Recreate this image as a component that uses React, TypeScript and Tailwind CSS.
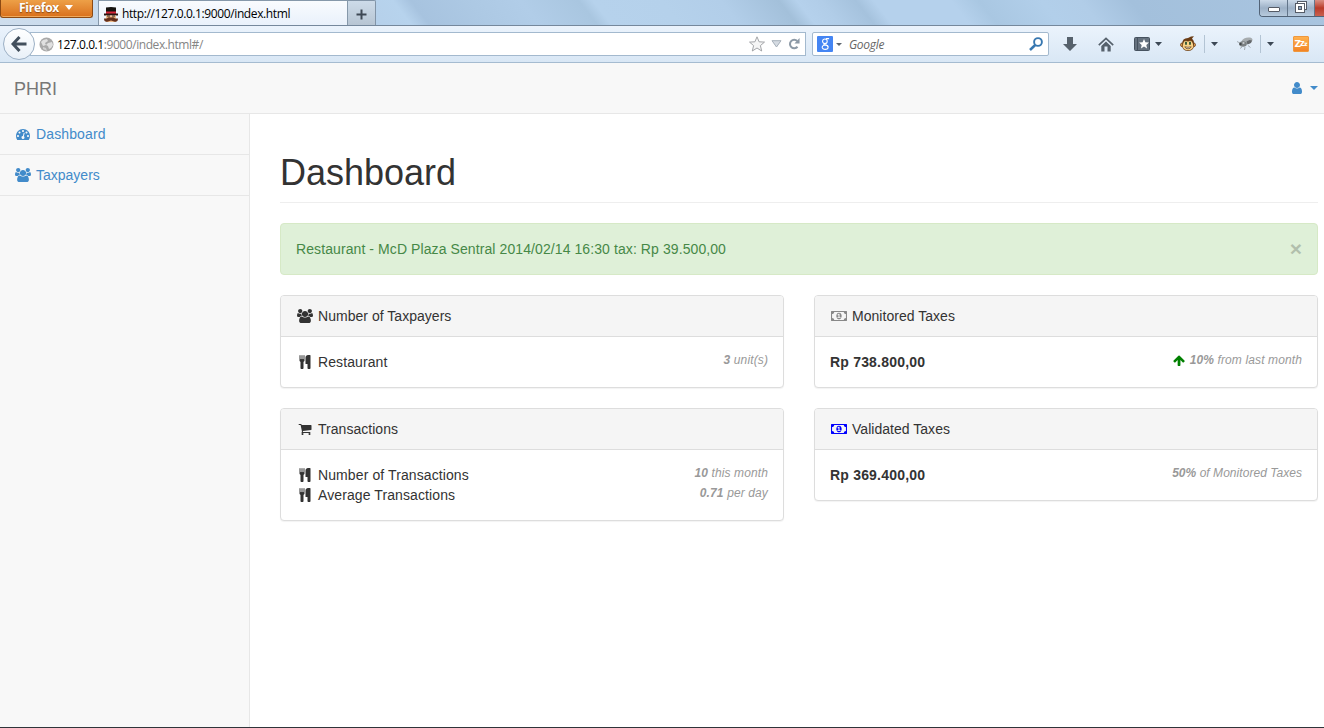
import React from "react";

const PATHS = {
  tachometer:
    "M384 1152q0-53-37.5-90.5t-90.5-37.5-90.5 37.5-37.5 90.5 37.5 90.5 90.5 37.5 90.5-37.5 37.5-90.5zm192-448q0-53-37.5-90.5t-90.5-37.5-90.5 37.5-37.5 90.5 37.5 90.5 90.5 37.5 90.5-37.5 37.5-90.5zm428 481l101-382q6-26-7.5-48.5t-38.5-29.5-48 6.5-30 39.5l-101 382q-60 5-107 43.5t-63 98.5q-20 77 20 146t117 89 146-20 89-117q16-60-6-117t-72-91zm660-33q0-53-37.5-90.5t-90.5-37.5-90.5 37.5-37.5 90.5 37.5 90.5 90.5 37.5 90.5-37.5 37.5-90.5zm-640-640q0-53-37.5-90.5t-90.5-37.5-90.5 37.5-37.5 90.5 37.5 90.5 90.5 37.5 90.5-37.5 37.5-90.5zm448 192q0-53-37.5-90.5t-90.5-37.5-90.5 37.5-37.5 90.5 37.5 90.5 90.5 37.5 90.5-37.5 37.5-90.5zm320 448q0 261-141 483-19 29-54 29h-1402q-35 0-54-29-141-221-141-483 0-182 71-348t191-286 286-191 348-71 348 71 286 191 191 286 71 348z",
  users:
    "M593 896q-162 5-265 128h-134q-82 0-138-40.5t-56-118.5q0-353 124-353 6 0 43.5 21t97.5 42.5 119 21.5q67 0 133-23-5 37-5 66 0 139 81 256zm1071 637q0 120-73 189.5t-194 69.5h-874q-121 0-194-69.5t-73-189.5q0-53 3.5-103.5t14-109 26.5-108.5 43-97.5 62-81 85.5-53.5 111.5-20q10 0 43 21.5t73 48 107 48 135 21.5 135-21.5 107-48 73-48 43-21.5q61 0 111.5 20t85.5 53.5 62 81 43 97.5 26.5 108.5 14 109 3.5 103.5zm-1024-1277q0 106-75 181t-181 75-181-75-75-181 75-181 181-75 181 75 75 181zm704 384q0 159-112.5 271.5t-271.5 112.5-271.5-112.5-112.5-271.5 112.5-271.5 271.5-112.5 271.5 112.5 112.5 271.5zm576 225q0 78-56 118.5t-138 40.5h-134q-103-123-265-128 81-117 81-256 0-29-5-66 66 23 133 23 59 0 119-21.5t97.5-42.5 43.5-21q124 0 124 353zm-128-609q0 106-75 181t-181 75-181-75-75-181 75-181 181-75 181 75 75 181z",
  cutlery:
    "M832 64v640q0 61-35.5 111t-92.5 70v779q0 52-38 90t-90 38h-128q-52 0-90-38t-38-90v-779q-57-20-92.5-70t-35.5-111v-640q0-26 19-45t45-19 45 19 19 45v416q0 26 19 45t45 19 45-19 19-45v-416q0-26 19-45t45-19 45 19 19 45v416q0 26 19 45t45 19 45-19 19-45v-416q0-26 19-45t45-19 45 19 19 45zm768 0v1600q0 52-38 90t-90 38h-128q-52 0-90-38t-38-90v-512h-224q-13 0-22.5-9.5t-9.5-22.5v-800q0-132 94-226t226-94h256q26 0 45 19t19 45z",
  cart:
    "M704 1536q0 52-38 90t-90 38-90-38-38-90 38-90 90-38 90 38 38 90zm896 0q0 52-38 90t-90 38-90-38-38-90 38-90 90-38 90 38 38 90zm128-1088v512q0 24-16.5 42.5t-40.5 21.5l-1044 122q13 60 13 70 0 16-24 64h920q26 0 45 19t19 45-19 45-45 19h-1024q-26 0-45-19t-19-45q0-11 8-31.5t16-36 21.5-40 15.5-29.5l-177-823h-204q-26 0-45-19t-19-45 19-45 45-19h256q16 0 28.5 6.5t19.5 15.5 13 24.5 8 26 5.5 29.5 4.5 26h1201q26 0 45 19t19 45z",
  user:
    "M1536 1399q0 109-62.5 187t-150.5 78h-854q-88 0-150.5-78t-62.5-187q0-85 8.5-160.5t31.5-152 58.5-131 94-89 134.5-34.5q131 128 313 128t313-128q76 0 134.5 34.5t94 89 58.5 131 31.5 152 8.5 160.5zm-256-887q0 159-112.5 271.5t-271.5 112.5-271.5-112.5-112.5-271.5 112.5-271.5 271.5-112.5 271.5 112.5 112.5 271.5z",
  arrowUp:
    "M1611 971q0 51-37 90l-75 75q-38 38-91 38-54 0-90-38l-294-293v704q0 52-37.5 84.5t-90.5 32.5h-128q-53 0-90.5-32.5t-37.5-84.5v-704l-294 293q-36 38-90 38t-90-38l-75-75q-38-38-38-90 0-53 38-91l651-651q35-37 90-37 54 0 91 37l651 651q37 39 37 91z",
  money:
    "M768 1152h384v-96h-128v-448h-114l-148 137 77 80q42-37 55-57h2v288h-128v96zm512-256q0 70-21 142t-59.5 134-101.5 101-138 39-138-39-101.5-101-59.5-134-21-142 21-142 59.5-134 101.5-101 138-39 138 39 101.5 101 59.5 134 21 142zm512 256v-512q-106 0-181-75t-75-181h-1152q0 106-75 181t-181 75v512q106 0 181 75t75 181h1152q0-106 75-181t181-75zm128-832v1152q0 26-19 45t-45 19h-1792q-26 0-45-19t-19-45v-1152q0-26 19-45t45-19h1792q26 0 45 19t19 45z",
};

type IconName = keyof typeof PATHS;

function Icon({ name, className = "" }: { name: IconName; className?: string }) {
  const wide = name === "users" || name === "money";
  return (
    <span className={`flex w-[18px] shrink-0 ${wide ? "pl-px" : "justify-center"} ${className}`}>
      <svg
        className={wide ? "h-[14px] w-4" : "h-[14px] w-[14px]"}
        viewBox={wide ? "0 0 1920 1792" : "0 0 1792 1792"}
        preserveAspectRatio="none"
        fill="currentColor"
      >
        <path d={PATHS[name]} />
      </svg>
    </span>
  );
}

function Caret({ className = "h-1 w-[7px]" }: { className?: string }) {
  return (
    <svg className={`shrink-0 ${className}`} viewBox="0 0 7 4" preserveAspectRatio="none" fill="currentColor">
      <path d="M0 0h7L3.5 4z" />
    </svg>
  );
}

function TitleBar() {
  return (
    <div className="relative flex h-[26px] shrink-0 items-start overflow-hidden border-b border-[#75889c] bg-[#b5d1ec]">
      <div className="absolute -left-5 h-[25px] w-[1364px] skew-x-[38deg] bg-[linear-gradient(90deg,#cfdeed_0px,#c8daec_110px,#b5cfe9_370px,#b7d3ed_422px,#a7c3df_440px,#adc9e4_500px,#b1cde8_550px,#a9c6e0_608px,#b6d2ec_622px,#b5d1eb_690px,#b2cee9_750px,#a3c0da_808px,#b5d1ec_826px,#b1cde8_850px,#a5c2dd_885px,#b5d1ec_903px,#b5d1ec_980px,#a9c7e2_1008px,#b2cfea_1070px,#b1cde8_1110px,#a3c0dc_1160px,#a9c5e0_1364px)]" />
      <div className="relative flex h-[18px] w-[93px] items-start rounded-b-[3px] border border-t-0 border-[#8d4a13] bg-gradient-to-b from-[#eda047] to-[#d9701a] pl-[18px] shadow-[inset_0_-1px_0_#f0a95b]">
        <span className="font-['Open_Sans',sans-serif] text-[12px] font-bold leading-4 tracking-[-0.25px] text-white [text-shadow:0_1px_1px_#8d4a13]">
          Firefox
        </span>
        <Caret className="ml-[6px] mt-[5px] h-[5px] w-2 text-white" />
      </div>
      <div className="relative ml-[5px] flex h-[25px] w-[250px] items-center border-x border-t border-[#8698aa] bg-gradient-to-b from-[#f9fbfe] to-[#e9f1fb] pl-1">
        <svg className="mt-[3px] h-4 w-4" viewBox="0 0 16 16">
          <path d="M3 .5q5-1 10 0V5H3z" fill="#15120f" />
          <path d="M3 4.500h10V7H3z" fill="#d52639" />
          <path d="M1 6.500h14v2H1z" fill="#2a1512" />
          <path d="M3 8.500h10V15H3z" fill="#f2bd8a" />
          <path d="M4 8.500h3v1H4zm5 0h3v1H9z" fill="#322018" />
          <path d="M8 10.500q3-1 4 1h3q0 4-4 3l-3-1-3 1q-4 1-4-3h3q1-2 4-1z" fill="#65301c" />
        </svg>
        <span className="ml-[3px] mt-[2px] whitespace-nowrap font-['Open_Sans',sans-serif] text-[12px] leading-4 tracking-[-0.39px] text-black">
          http://127.0.0.1:9000/index.html
        </span>
      </div>
      <div className="relative flex h-[25px] w-7 items-center justify-center rounded-tr-[2px] border-r border-t border-[#8294a7] bg-gradient-to-b from-[#cddbe9] to-[#b7c5d3]">
        <svg className="mt-[3px] h-[11px] w-[11px]" viewBox="0 0 11 11" stroke="#3e4854" strokeWidth="2">
          <path d="M5.500 0.500v10M0.500 5.500h10" />
        </svg>
      </div>
      <div className="relative ml-auto flex h-[17px] w-[65px] overflow-hidden rounded-bl-[4px] border-b border-l border-[#526377] text-[#48515c]">
        <div className="flex w-7 items-center justify-center border-r border-[#62758a] bg-gradient-to-b from-[#cbd9e8] via-[#9db1c7] to-[#b7cadd] pt-[2px]">
          <svg className="h-[5px] w-3" viewBox="0 0 12 5">
            <rect x=".5" y=".5" width="11" height="4" rx=".5" fill="#fff" stroke="#555b66" />
          </svg>
        </div>
        <div className="flex w-[27px] items-center justify-center border-r border-[#62758a] bg-gradient-to-b from-[#cbd9e8] via-[#9db1c7] to-[#b7cadd]">
          <svg className="mb-[2px] h-3 w-3" viewBox="0 0 12 12" fill="#fff" stroke="#555b66">
            <rect x="2.500" y=".5" width="9" height="8" />
            <rect x=".5" y="2.500" width="9" height="9" />
            <rect x="3.500" y="5.500" width="3" height="3" fill="#8ea5bf" />
          </svg>
        </div>
        <div className="flex-1 bg-gradient-to-b from-[#d88d82] via-[#b93a29] to-[#c9604f]" />
      </div>
    </div>
  );
}

function Toolbar() {
  return (
    <div className="flex h-[37px] shrink-0 items-center border-b border-[#a5bbd0] bg-gradient-to-b from-[#ebf3fc] to-[#d9e7f5] text-[#3c4855]">
      <div className="z-10 ml-[3px] flex h-8 w-8 shrink-0 items-center justify-center rounded-full border border-[#9cb0c5] bg-gradient-to-b from-white to-[#e9f0f8]">
        <svg className="h-4 w-4" viewBox="0 0 16 16" fill="none" stroke="#424f5c" strokeWidth="3">
          <path d="M8.500 1L2 8l6.500 7M2.500 8H15.500" />
        </svg>
      </div>
      <div className="-ml-[5px] flex h-6 w-[776px] items-center border border-[#a3b9ce] bg-white pl-2">
        <svg className="h-[15px] w-[15px]" viewBox="0 0 15 15">
          <circle cx="7.500" cy="7.500" r="7" fill="#a9a9a9" />
          <path d="M2 5l2-2 4-1 1 2-3 2 1 2-3 1zM9 6l4-1 1 3-2 3-2 1-1-3-2-1z" fill="#e0e0e0" />
          <path d="M4 10l3 1 1 3-4-2z" fill="#d2d2d2" />
        </svg>
        <span className="ml-[3px] mt-[2px] whitespace-nowrap font-['Open_Sans',sans-serif] text-[12px] leading-4 tracking-[-0.43px] text-[#858585]">
          <span className="text-black">127.0.0.1</span>:9000/index.html#/
        </span>
        <svg className="ml-auto h-4 w-4" viewBox="0 0 16 16" fill="#f5f5f5" stroke="#a3a5a8">
          <path d="M8 .8l2.100 5 5.400.3-4.100 3.500 1.300 5.400L8 12l-4.700 3 1.300-5.400L.5 6.100l5.400-.3z" />
        </svg>
        <svg className="ml-[6px] h-2 w-[11px]" viewBox="0 0 11 8" fill="#d5dbe2" stroke="#a5afb9">
          <path d="M1 .7h9L5.500 7z" />
        </svg>
        <svg className="ml-[6px] mr-[5px] h-3 w-3" viewBox="0 0 13 13">
          <path d="M10 3.300A4.600 4.600 0 1 0 10.300 9.500" fill="none" stroke="#8c99a6" strokeWidth="2.200" />
          <path d="M12.500 0v6H7z" fill="#8c99a6" />
        </svg>
      </div>
      <div className="ml-[6px] flex h-6 w-[237px] items-center rounded-[2px] border border-[#a3b9ce] bg-white pl-1">
        <div className="flex h-4 w-4 items-center justify-center rounded-[1px] bg-[#4485f3]">
          <svg className="h-[14px] w-[9px]" viewBox="0 0 10 14" fill="none" stroke="white" strokeWidth="1.200">
            <circle cx="4.300" cy="4" r="2.600" />
            <ellipse cx="4.600" cy="10.600" rx="3.300" ry="2.400" />
            <path d="M9 1H5.500M4 6.600q-2 1 1 1.500 3 .5 2.500 2" />
          </svg>
        </div>
        <Caret className="ml-[3px] h-[3px] w-[6px] text-[#5d6670]" />
        <span className="ml-[7px] mt-[2px] font-['Open_Sans',sans-serif] text-[12px] italic leading-4 tracking-[-0.3px] text-[#666]">
          Google
        </span>
        <svg className="ml-auto mr-[5px] h-[14px] w-[14px]" viewBox="0 0 14 14" fill="none" stroke="#3777b0">
          <circle cx="9" cy="5" r="3.900" strokeWidth="1.900" />
          <path d="M6.200 8L1 13" strokeWidth="2.500" />
        </svg>
      </div>
      <svg className="ml-[14px] h-[14px] w-[14px] shrink-0" viewBox="0 0 14 14" fill="#56616c">
        <path d="M4 0h6v7h4l-7 7-7-7h4z" />
      </svg>
      <svg className="ml-[21px] h-[15px] w-4 shrink-0" viewBox="0 0 16 15">
        <path d="M.8 8.200L8 1.500l7.200 6.700" fill="none" stroke="#56616c" strokeWidth="1.700" />
        <path d="M3.300 9L8 4.600 12.700 9v5.500H9.500V9.500h-3v5H3.300z" fill="#56616c" />
      </svg>
      <svg className="ml-5 h-[14px] w-4 shrink-0" viewBox="0 0 16 14">
        <rect x=".5" y=".5" width="15" height="13" rx="1" fill="#65717e" stroke="#46525f" />
        <path d="M3.500 1v12" stroke="#46525f" />
        <path d="M10 2l1.400 3.300 3.600.3-2.700 2.400.8 3.500-3.100-1.900L6.900 11.500l.8-3.500L5 5.600l3.600-.3z" fill="#fff" />
      </svg>
      <Caret className="ml-[5px] h-1 w-[7px]" />
      <svg className="ml-[18px] h-4 w-4 shrink-0" viewBox="0 0 16 16">
        <circle cx="2.400" cy="8.800" r="1.900" fill="#e0a050" stroke="#6a3a14" strokeWidth=".8" />
        <circle cx="13.600" cy="8.800" r="1.900" fill="#e0a050" stroke="#6a3a14" strokeWidth=".8" />
        <path d="M2.200 8Q2 2 8 2l3-1.500 3-.2-2 2.200Q14 4 14 8q.500 7-6 7T2.200 8z" fill="#6b3c15" />
        <path d="M3.200 7.500Q4 4 7 5l1 .8 1-.8q3-1 3.800 2.500l.5 3Q12.500 14.300 8 14.300T2.800 10.500z" fill="#f9d287" />
        <path d="M6 5.800v3M10 5.800v3" stroke="#1f4a2c" strokeWidth="1.700" />
        <path d="M4.800 10.800q3.200 1 6.400 0-.8 2-3.200 2t-3.200-2z" fill="#fff" stroke="#563314" strokeWidth=".7" />
      </svg>
      <div className="ml-[8px] h-[18px] w-px bg-[#b3c4d4]" />
      <Caret className="ml-[6px] h-1 w-[7px]" />
      <svg className="ml-[19px] h-4 w-4 shrink-0" viewBox="0 0 16 16">
        <path d="M3 7L0 5.500M5 11l-2 1.500M8 11l-.5 3M11 9.500l2.500 2" stroke="#a5adb4" />
        <ellipse cx="10" cy="4.800" rx="5.600" ry="3.200" transform="rotate(-15 10 4.800)" fill="#a6abae" />
        <ellipse cx="6" cy="8" rx="3.800" ry="2.800" fill="#7b8082" />
        <path d="M9.500 5.500l3-1.500 2.500.5-1 2.500-3.500 1.500z" fill="#64686b" />
        <path d="M2.500 7h2v2h-2z" fill="#44484b" />
        <circle cx="6.500" cy="7" r="1.100" fill="#c9cdd0" />
      </svg>
      <div className="ml-[7px] h-[18px] w-px bg-[#b3c4d4]" />
      <Caret className="ml-[6px] h-1 w-[7px]" />
      <div className="ml-[19px] flex h-4 w-4 shrink-0 items-center justify-center overflow-hidden rounded-[1px] border border-[#ef983e] bg-gradient-to-b from-[#ffb14e] to-[#f28426] font-['DejaVu_Sans',sans-serif] font-bold leading-none text-white">
        <span className="text-[9px] tracking-[-1px]">Z</span>
        <span className="text-[8px] tracking-[-0.5px]">z</span>
        <span className="mb-px text-[6px]">z</span>
      </div>
    </div>
  );
}

function Panel({ icon, iconClass, title, children }: { icon: IconName; iconClass?: string; title: string; children: React.ReactNode }) {
  return (
    <section className="rounded-[4px] border border-[#ddd] bg-white shadow-[0_1px_1px_rgba(0,0,0,0.05)]">
      <h2 className="flex h-[41px] items-center rounded-t-[3px] border-b border-[#ddd] bg-[#f5f5f5] px-[15px]">
        <Icon name={icon} className={iconClass} />
        <span className="ml-1 tracking-[0.03px]">{title}</span>
      </h2>
      <div className="p-[15px]">{children}</div>
    </section>
  );
}

function Row({ label, icon, value, note, up }: { label: string; icon?: boolean; value: string; note: string; up?: boolean }) {
  return (
    <div className="flex h-5">
      {icon ? (
        <div className="flex items-center">
          <Icon name="cutlery" />
          <span className="ml-1 tracking-[0.1px]">{label}</span>
        </div>
      ) : (
        <strong className="tracking-[0.2px]">{label}</strong>
      )}
      <div className="ml-auto flex h-4 items-center whitespace-nowrap text-[12px] italic leading-4 text-[#999]">
        {up && (
          <svg className="mr-1 h-[13px] w-[13px]" viewBox="0 0 1792 1792" fill="green">
            <path d={PATHS.arrowUp} />
          </svg>
        )}
        <span className={note === "of Monitored Taxes" ? "tracking-[0.04px]" : "tracking-[0.12px]"}>
          <b>{value}</b> {note}
        </span>
      </div>
    </div>
  );
}

export default function App() {
  return (
    <div className="flex h-[728px] w-[1324px] flex-col overflow-hidden border-b border-[#30343a] bg-white font-['Liberation_Sans',Arial,sans-serif] text-[14px] leading-5 text-[#333]">
      <TitleBar />
      <Toolbar />
      <header className="flex h-[51px] shrink-0 items-center border-b border-[#e7e7e7] bg-[#f8f8f8] pl-[14px] pr-[6px]">
        <span className="pt-[2px] text-[18px] text-[#777]">PHRI</span>
        <div className="ml-auto flex items-center text-[#428bca]">
          <Icon name="user" />
          <Caret className="ml-[4px] h-1 w-2" />
        </div>
      </header>
      <div className="flex min-h-0 flex-1">
        <nav className="w-[250px] shrink-0 border-r border-[#e7e7e7] bg-[#f8f8f8] text-[#428bca]">
          <a className="flex h-[41px] items-center border-b border-[#e7e7e7] pl-[14px]">
            <Icon name="tachometer" />
            <span className="ml-1 tracking-[0.13px]">Dashboard</span>
          </a>
          <a className="flex h-[41px] items-center border-b border-[#e7e7e7] pl-[14px]">
            <Icon name="users" />
            <span className="ml-1">Taxpayers</span>
          </a>
        </nav>
        <main className="flex-1 pl-[30px] pr-[6px] pt-[39px]">
          <h1 className="h-[50px] border-b border-[#eee] text-[36px] leading-10">Dashboard</h1>
          <div className="mt-5 flex h-[52px] items-center rounded-[4px] border border-[#d6e9c6] bg-[#dff0d8] px-[15px] text-[#468847]">
            <span className="tracking-[0.09px]">Restaurant - McD Plaza Sentral 2014/02/14 16:30 tax: Rp 39.500,00</span>
            <span className="ml-auto text-[21px] font-bold leading-5 text-black opacity-20">×</span>
          </div>
          <div className="mt-5 grid grid-cols-2 gap-x-[30px]">
            <div className="flex flex-col gap-5">
              <Panel icon="users" title="Number of Taxpayers">
                <Row icon label="Restaurant" value="3" note="unit(s)" />
              </Panel>
              <Panel icon="cart" title="Transactions">
                <Row icon label="Number of Transactions" value="10" note="this month" />
                <Row icon label="Average Transactions" value="0.71" note="per day" />
              </Panel>
            </div>
            <div className="flex flex-col gap-5">
              <Panel icon="money" iconClass="text-[#888]" title="Monitored Taxes">
                <Row label="Rp 738.800,00" value="10%" note="from last month" up />
              </Panel>
              <Panel icon="money" iconClass="text-[#0000ff]" title="Validated Taxes">
                <Row label="Rp 369.400,00" value="50%" note="of Monitored Taxes" />
              </Panel>
            </div>
          </div>
        </main>
      </div>
    </div>
  );
}
